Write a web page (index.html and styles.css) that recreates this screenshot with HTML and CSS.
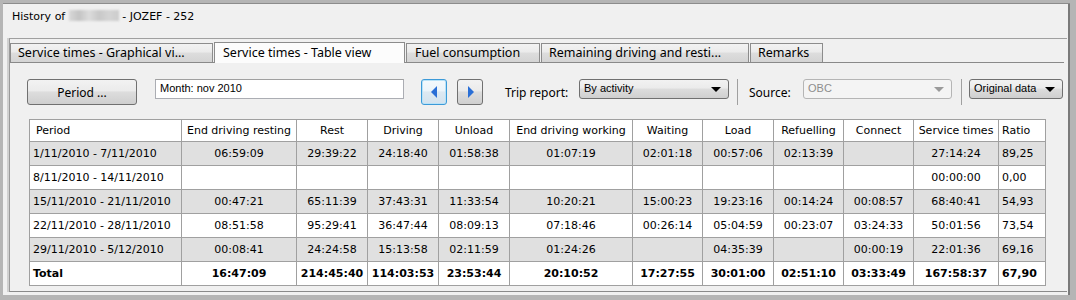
FILE: index.html
```html
<!DOCTYPE html>
<html lang="en">
<head>
    <meta charset="UTF-8">
    <title>History - JOZEF - 252</title>
    <link rel="stylesheet" href="styles.css">
</head>
<body>
    <div class="window">
        <!-- Заголовок -->
        <div class="title">History of <span class="blurred"></span> - JOZEF - 252</div>

        <div class="group">
            <!-- Вкладки -->
            <div class="tabs">
                <div class="tab tab-graph">Service times - Graphical vi...</div>
                <div class="tab tab-table active">Service times - Table view</div>
                <div class="tab tab-fuel">Fuel consumption</div>
                <div class="tab tab-remaining">Remaining driving and resti...</div>
                <div class="tab tab-remarks">Remarks</div>
            </div>

            <div class="page">
                <!-- Панель фильтров -->
                <div class="toolbar">
                    <button class="btn btn-period">Period ...</button>
                    <div class="field field-month">Month: nov 2010</div>
                    <button class="btn btn-nav btn-prev focused"><span class="arrow-left"></span></button>
                    <button class="btn btn-nav btn-next"><span class="arrow-right"></span></button>
                    <span class="label label-trip">Trip report:</span>
                    <div class="combo combo-trip">By activity<span class="caret"></span></div>
                    <span class="sep sep-1"></span>
                    <span class="label label-source">Source:</span>
                    <div class="combo combo-source disabled">OBC<span class="caret"></span></div>
                    <span class="sep sep-2"></span>
                    <div class="combo combo-data">Original data<span class="caret"></span></div>
                </div>

                <!-- Таблица -->
                <table class="times">
                    <colgroup>
                        <col class="c-period">
                        <col class="c-edr">
                        <col class="c-71">
                        <col class="c-71">
                        <col class="c-71">
                        <col class="c-edw">
                        <col class="c-70">
                        <col class="c-71">
                        <col class="c-70">
                        <col class="c-70">
                        <col class="c-service">
                        <col class="c-ratio">
                    </colgroup>
                    <thead>
                        <tr>
                            <th class="left">Period</th>
                            <th>End driving resting</th>
                            <th>Rest</th>
                            <th>Driving</th>
                            <th>Unload</th>
                            <th>End driving working</th>
                            <th>Waiting</th>
                            <th>Load</th>
                            <th>Refuelling</th>
                            <th>Connect</th>
                            <th>Service times</th>
                            <th class="left">Ratio</th>
                        </tr>
                    </thead>
                    <tbody>
                        <tr class="shaded">
                            <td class="left">1/11/2010 - 7/11/2010</td>
                            <td>06:59:09</td><td>29:39:22</td><td>24:18:40</td><td>01:58:38</td>
                            <td>01:07:19</td><td>02:01:18</td><td>00:57:06</td><td>02:13:39</td>
                            <td></td><td>27:14:24</td><td class="left">89,25</td>
                        </tr>
                        <tr>
                            <td class="left">8/11/2010 - 14/11/2010</td>
                            <td></td><td></td><td></td><td></td>
                            <td></td><td></td><td></td><td></td>
                            <td></td><td>00:00:00</td><td class="left">0,00</td>
                        </tr>
                        <tr class="shaded">
                            <td class="left">15/11/2010 - 21/11/2010</td>
                            <td>00:47:21</td><td>65:11:39</td><td>37:43:31</td><td>11:33:54</td>
                            <td>10:20:21</td><td>15:00:23</td><td>19:23:16</td><td>00:14:24</td>
                            <td>00:08:57</td><td>68:40:41</td><td class="left">54,93</td>
                        </tr>
                        <tr>
                            <td class="left">22/11/2010 - 28/11/2010</td>
                            <td>08:51:58</td><td>95:29:41</td><td>36:47:44</td><td>08:09:13</td>
                            <td>07:18:46</td><td>00:26:14</td><td>05:04:59</td><td>00:23:07</td>
                            <td>03:24:33</td><td>50:01:56</td><td class="left">73,54</td>
                        </tr>
                        <tr class="shaded">
                            <td class="left">29/11/2010 - 5/12/2010</td>
                            <td>00:08:41</td><td>24:24:58</td><td>15:13:58</td><td>02:11:59</td>
                            <td>01:24:26</td><td></td><td>04:35:39</td><td></td>
                            <td>00:00:19</td><td>22:01:36</td><td class="left">69,16</td>
                        </tr>
                        <tr class="total">
                            <td class="left">Total</td>
                            <td>16:47:09</td><td>214:45:40</td><td>114:03:53</td><td>23:53:44</td>
                            <td>20:10:52</td><td>17:27:55</td><td>30:01:00</td><td>02:51:10</td>
                            <td>03:33:49</td><td>167:58:37</td><td class="left">67,90</td>
                        </tr>
                    </tbody>
                </table>
            </div>
        </div>
    </div>
</body>
</html>
```

FILE: styles.css
```css
* {
    margin: 0;
    padding: 0;
    box-sizing: border-box;
}

body {
    width: 1076px;
    height: 300px;
    overflow: hidden;
    background: #b5b5b5;
    font-family: "DejaVu Sans", Verdana, sans-serif;
    font-size: 11px;
    color: #000;
}

/* Окно */
.window {
    width: 1076px;
    height: 300px;
    background: #f0f0f0;
    border-style: solid;
    border-color: #b5b5b5;
    border-width: 3px 6px 5px 3px;
    box-shadow: inset 0 1px 0 #8c8c8c, inset -2px 0 0 #7a7a7a;
    display: flex;
    flex-direction: column;
}

.title {
    height: 35px;
    padding: 7px 0 0 9px;
    line-height: 14px;
    white-space: nowrap;
}

.blurred {
    display: inline-block;
    width: 50px;
    height: 11px;
    vertical-align: -1px;
    background: linear-gradient(90deg, #d8d8d8, #c4c4c4 20%, #dcdcdc 40%, #c8c8c8 60%, #d4d4d4 80%, #cccccc);
    filter: blur(1px);
}

.group {
    flex: 1;
    margin: 0 3px 3px 6px;
    border-top: 1px solid #a0a0a0;
    border-left: 1px solid #9a9a9a;
    border-bottom: 1px solid #8a8a8a;
    box-shadow: -2px 0 0 #d0d0d0;
    padding-top: 3px;
}

/* Вкладки */
.tabs {
    display: flex;
    align-items: flex-end;
    height: 21px;
    margin-right: 3px;
    border-bottom: 1px solid #898989;
    font-family: "Noto Sans", "Open Sans", sans-serif;
    font-size: 12.5px;
}

.tab {
    height: 19px;
    line-height: 17px;
    padding-left: 7px;
    white-space: nowrap;
    overflow: hidden;
    border: 1px solid #8c8c8c;
    border-bottom: none;
    background: linear-gradient(#f2f2f2, #ebebeb 45%, #dddddd 50%, #d4d4d4);
    color: #000;
}

.tab.active {
    height: 21px;
    margin-bottom: -1px;
    line-height: 19px;
    padding-left: 8px;
    background: #fcfcfc;
    border-color: #8c8c8c;
}

.tab-graph { width: 203px; }
.tab-table { width: 191px; }
.tab-fuel { width: 134px; padding-left: 8px; }
.tab-remaining { width: 208px; }
.tab-remarks { width: 73px; }

.tab + .tab { margin-left: 1px; }

/* Панель фильтров */
.page {
    padding: 16px 0 0 17px;
}

.toolbar {
    display: flex;
    align-items: flex-start;
    height: 26px;
}

.btn {
    height: 26px;
    border: 1px solid #707070;
    border-radius: 3px;
    background: linear-gradient(#f2f2f2, #ebebeb 45%, #dddddd 50%, #cfcfcf);
    font-family: "Noto Sans", "Open Sans", sans-serif;
    font-size: 12px;
    color: #000;
}

.btn-period { width: 110px; }

.field {
    width: 249px;
    height: 20px;
    margin-left: 18px;
    padding-left: 4px;
    line-height: 17px;
    background: #fff;
    border: 1px solid #abadb3;
    border-top-color: #a0a0a0;
    font-family: "Liberation Sans", Arial, sans-serif;
    font-size: 11px;
}

.btn-nav {
    width: 26px;
    display: flex;
    align-items: center;
    justify-content: center;
}

.btn-prev { margin-left: 17px; }
.btn-next { margin-left: 10px; }

.btn.focused {
    border-color: #3c9ad8;
    box-shadow: inset 0 0 0 1px #b8e2f8;
    background: linear-gradient(#f4f9fc, #ecf4fa 45%, #dde9f2 50%, #d3e2ee);
}

.arrow-left,
.arrow-right {
    width: 0;
    height: 0;
    border-top: 6px solid transparent;
    border-bottom: 6px solid transparent;
}

.arrow-left { border-right: 6px solid #2a6fd6; margin-right: 1px; }
.arrow-right { border-left: 6px solid #2a6fd6; margin-left: 1px; }

.label {
    align-self: center;
    font-family: "Noto Sans", "Open Sans", sans-serif;
    font-size: 12px;
    white-space: nowrap;
}

.label-trip { margin-left: 22px; width: 74px; }
.label-source { margin-left: 11px; width: 54px; }

.combo {
    position: relative;
    height: 20px;
    padding-left: 4px;
    line-height: 17px;
    border: 1px solid #707070;
    border-radius: 3px;
    background: linear-gradient(#f2f2f2, #ebebeb 45%, #dddddd 50%, #cfcfcf);
    font-family: "Liberation Sans", Arial, sans-serif;
    font-size: 11px;
    white-space: nowrap;
}

.caret {
    position: absolute;
    right: 7px;
    top: 7px;
    width: 0;
    height: 0;
    border-left: 5px solid transparent;
    border-right: 5px solid transparent;
    border-top: 5px solid #000;
}

.combo-trip { width: 150px; }
.combo-source { width: 149px; }
.combo-data { width: 94px; margin-left: 7px; }

.combo.disabled {
    color: #8d8d8d;
    border-color: #b5b5b5;
    background: #f4f4f4;
}

.combo.disabled .caret { border-top-color: #9a9a9a; }

.sep {
    width: 1px;
    height: 26px;
    background: #a0a0a0;
}

.sep-1 { margin: 0 0 0 8px; }
.sep-2 { margin: 0 0 0 9px; }

/* Таблица */
.times {
    margin: 14px 0 0 2px;
    width: 1017px;
    table-layout: fixed;
    border-collapse: collapse;
    background: #fff;
    font-size: 11px;
}

.times th,
.times td {
    border: 1px solid #a0a0a0;
    text-align: center;
    white-space: nowrap;
    overflow: hidden;
    font-weight: normal;
    padding: 0;
}

.times thead tr { height: 22px; }
.times tbody tr { height: 24px; }

.times .left {
    text-align: left;
    padding-left: 3px;
}

.times th.left { padding-left: 6px; }
.times th:last-child { padding-left: 3px; }

.times tr.shaded td { background: #e0e0e0; }
.times tr.total td { font-weight: bold; }

.c-period { width: 152px; }
.c-edr { width: 115px; }
.c-71 { width: 71px; }
.c-70 { width: 70px; }
.c-edw { width: 123px; }
.c-service { width: 85px; }
.c-ratio { width: 47px; }
```
